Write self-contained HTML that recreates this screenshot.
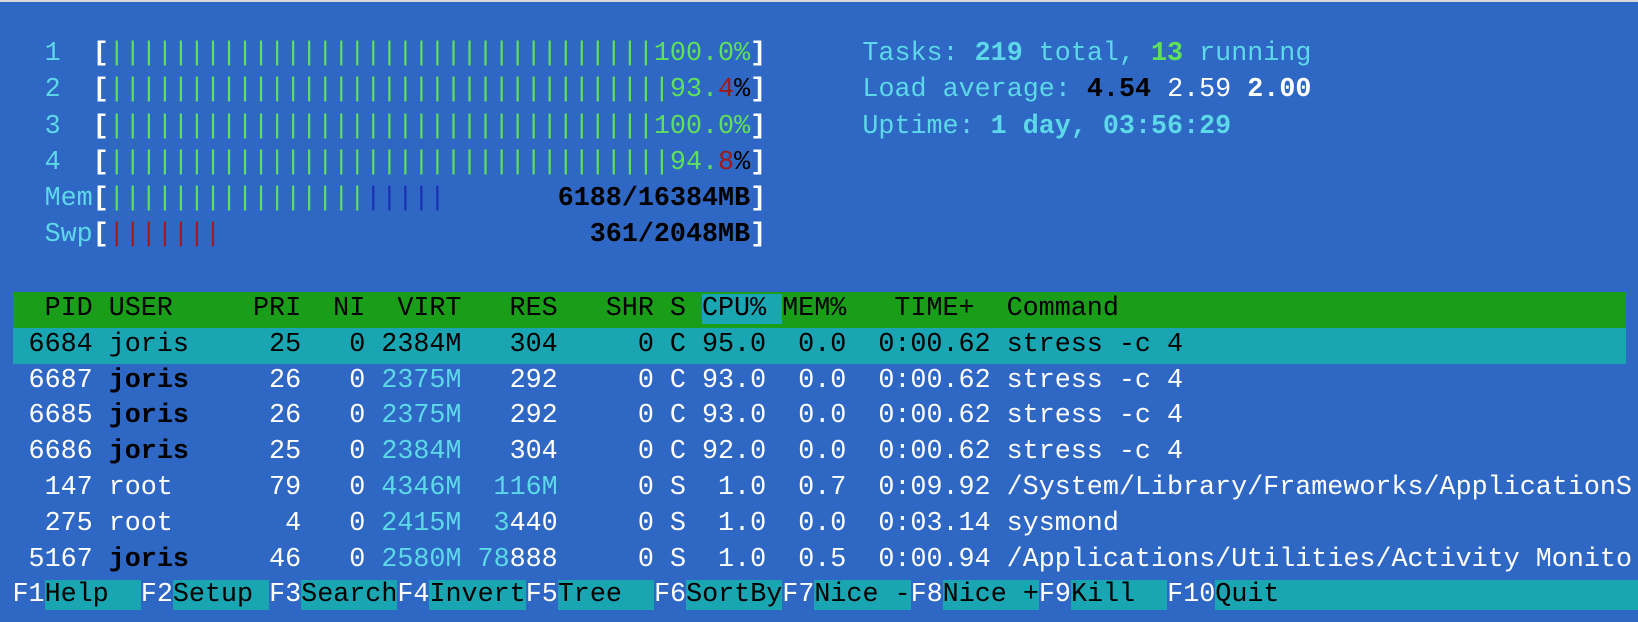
<!DOCTYPE html>
<html><head><meta charset="utf-8"><style>
html,body{margin:0;padding:0;width:1638px;height:622px;overflow:hidden;background:#2f68c4;}
body{border-top:2px solid #d8d8d8;box-sizing:border-box;position:relative;}
pre{margin:0;position:absolute;left:12.5px;font-family:"Liberation Mono","DejaVu Sans Mono",monospace;font-size:26.73px;color:#fff;white-space:pre;}
#meters{top:34px;line-height:36.3px;}
#table{top:290px;line-height:35.8px;}
.c{color:#5dd8e8}.g{color:#5fe05a}.b{color:#1830b0}.r{color:#a81818}.k{color:#000}.w{color:#fff}
.bd{font-weight:bold}.dr{color:#a01818}
.hdr{background:#1a9e1a;color:#000;display:inline-block;width:1613px}
.sel{background:#1aa5b2;color:#000;display:inline-block;width:1613px}
.ct{background:#1aa5b2}
.t{background:#1aa5b2;color:#000}
</style></head><body>
<pre id="meters">  <span class="c">1</span>  <span class="w bd">[</span><span class="g">||||||||||||||||||||||||||||||||||100.0%</span><span class="w bd">]</span>      <span class="c">Tasks: </span><span class="c bd">219</span><span class="c"> total, </span><span class="g bd">13</span><span class="c"> running</span>
  <span class="c">2</span>  <span class="w bd">[</span><span class="g">|||||||||||||||||||||||||||||||||||93.</span><span class="dr">4</span><span class="k">%</span><span class="w bd">]</span>      <span class="c">Load average: </span><span class="k bd">4.54</span> <span class="w">2.59</span> <span class="w bd">2.00</span>
  <span class="c">3</span>  <span class="w bd">[</span><span class="g">||||||||||||||||||||||||||||||||||100.0%</span><span class="w bd">]</span>      <span class="c">Uptime: </span><span class="c bd">1 day, 03:56:29</span>
  <span class="c">4</span>  <span class="w bd">[</span><span class="g">|||||||||||||||||||||||||||||||||||94.</span><span class="dr">8</span><span class="k">%</span><span class="w bd">]</span>
  <span class="c">Mem</span><span class="w bd">[</span><span class="g">||||||||||||||||</span><span class="b">|||||</span>       <span class="k bd">6188/16384MB</span><span class="w bd">]</span>
  <span class="c">Swp</span><span class="w bd">[</span><span class="r">|||||||</span>                       <span class="k bd">361/2048MB</span><span class="w bd">]</span></pre>
<pre id="table"><span class="hdr">  PID USER     PRI  NI  VIRT   RES   SHR S <span class="ct">CPU% </span>MEM%   TIME+  Command</span>
<span class="sel"> 6684 joris     25   0 2384M   304     0 C 95.0  0.0  0:00.62 stress -c 4</span>
 6687 <span class="k bd">joris</span>     26   0 <span class="c">2375M</span>   292     0 C 93.0  0.0  0:00.62 stress -c 4
 6685 <span class="k bd">joris</span>     26   0 <span class="c">2375M</span>   292     0 C 93.0  0.0  0:00.62 stress -c 4
 6686 <span class="k bd">joris</span>     25   0 <span class="c">2384M</span>   304     0 C 92.0  0.0  0:00.62 stress -c 4
  147 root      79   0 <span class="c">4346M</span>  <span class="c">116M</span>     0 S  1.0  0.7  0:09.92 /System/Library/Frameworks/ApplicationS
  275 root       4   0 <span class="c">2415M</span>  <span class="c">3</span>440     0 S  1.0  0.0  0:03.14 sysmond
 5167 <span class="k bd">joris</span>     46   0 <span class="c">2580M</span> <span class="c">78</span>888     0 S  1.0  0.5  0:00.94 /Applications/Utilities/Activity Monito
F1<span class="t">Help  </span>F2<span class="t">Setup </span>F3<span class="t">Search</span>F4<span class="t">Invert</span>F5<span class="t">Tree  </span>F6<span class="t">SortBy</span>F7<span class="t">Nice -</span>F8<span class="t">Nice +</span>F9<span class="t">Kill  </span>F10<span class="t">Quit                          </span></pre>
</body></html>
